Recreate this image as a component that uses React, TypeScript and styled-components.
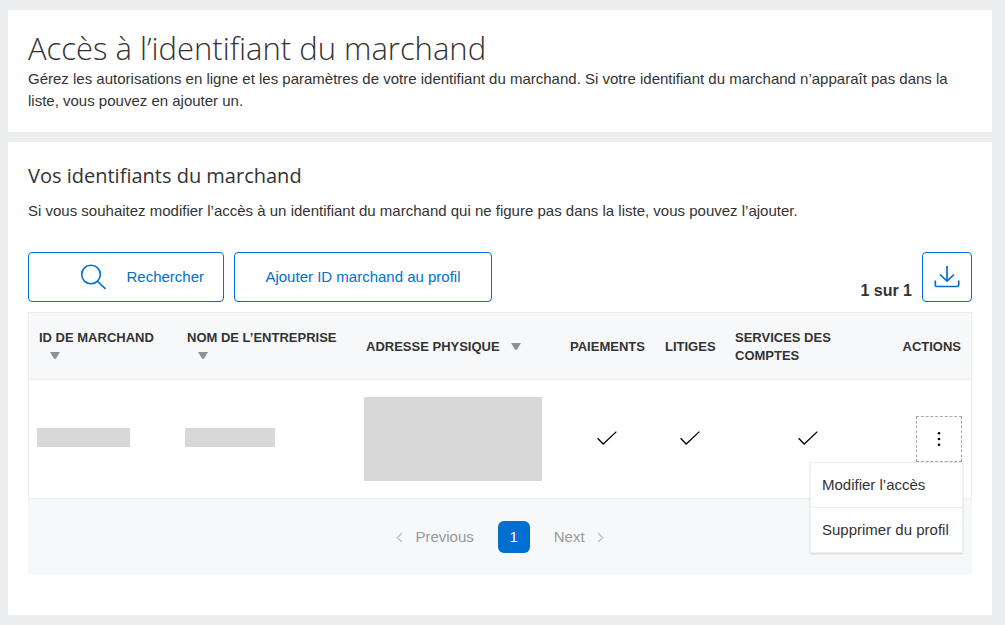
import React from "react";
import styled, { createGlobalStyle } from "styled-components";

const GlobalStyle = createGlobalStyle`
  *, *::before, *::after { box-sizing: border-box; }
  body {
    margin: 0;
    background: #fff;
    color: #333;
    font-family: "Liberation Sans", Arial, sans-serif;
    font-size: 15px;
    line-height: 22px;
  }
  h1, h2, p { margin: 0; }
  button { font: inherit; color: inherit; padding: 0; cursor: pointer; }
`;

const blue = "#006fcf";
const line = "#ecedee";

const Page = styled.div`
  display: flex;
  flex-direction: column;
  gap: 10px;
  padding: 10px 13px 10px 8px;
  background: #ecedee;
`;

const Card = styled.section<{ $top: number; $bottom: number }>`
  background: #fff;
  padding: ${(p) => p.$top}px 20px ${(p) => p.$bottom}px;
`;

const Title = styled.h1`
  font-family: "Open Sans", sans-serif;
  font-weight: 300;
  font-size: 31px;
  line-height: 36px;
  margin-bottom: 2px;
`;

const Subtitle = styled.h2`
  font-family: "Open Sans", sans-serif;
  font-weight: 400;
  font-size: 20px;
  line-height: 28px;
  margin-bottom: 10px;
`;

const Toolbar = styled.div`
  display: flex;
  align-items: flex-end;
  gap: 10px;
  margin: 30px 0 10px;
`;

const OutlineButton = styled.button<{ $width: number }>`
  display: flex;
  align-items: center;
  justify-content: center;
  width: ${(p) => p.$width}px;
  height: 50px;
  border: 1px solid ${blue};
  border-radius: 4px;
  background: #fff;
  color: ${blue};
`;

const SearchButton = styled(OutlineButton)`
  justify-content: flex-end;
  gap: 20px;
  padding-right: 19px;
`;

const Count = styled.span`
  margin-left: auto;
  font-size: 16px;
  font-weight: 700;
`;

const Table = styled.table`
  width: 100%;
  table-layout: fixed;
  border-collapse: separate;
  border-spacing: 0;
  border: 1px solid ${line};
`;

const HeadCell = styled.th<{ $align?: string }>`
  height: 67px;
  padding: 2px 10px 0;
  background: #f7f8f9;
  border-bottom: 1px solid ${line};
  font-size: 13px;
  line-height: 18px;
  text-align: ${(p) => p.$align || "left"};
`;

const SortButton = styled.button`
  display: inline-block;
  width: 10px;
  height: 7px;
  margin-left: 11px;
  border: 0;
  background: none;
  line-height: 0;
  vertical-align: 1px;
`;

const Cell = styled.td`
  height: 118px;
  padding: 0 9px 0 8px;
`;

const CheckIcon = styled.svg`
  display: block;
  margin: 0 auto 2px;
`;

const Redacted = styled.div<{ $w: number }>`
  width: ${(p) => p.$w}px;
  height: 19px;
  margin-bottom: 3px;
  background: #d8d8d8;
`;

const RedactedBlock = styled(Redacted)`
  height: 84px;
  margin-bottom: 0;
`;

const ActionBox = styled.div`
  position: relative;
  width: 46px;
  margin-left: auto;
`;

const MoreButton = styled.button`
  display: flex;
  align-items: center;
  justify-content: center;
  width: 46px;
  height: 46px;
  border: 1px dashed #a7a8aa;
  background: #fff;
`;

const Menu = styled.div`
  position: absolute;
  top: 100%;
  right: -1px;
  width: 153px;
  background: #fff;
  border: 1px solid ${line};
  box-shadow: 0 1px 2px rgba(0, 0, 0, 0.15);
`;

const MenuItem = styled.button`
  display: block;
  width: 100%;
  height: 44px;
  padding-left: 11px;
  border: 0;
  background: #fff;
  text-align: left;
  white-space: nowrap;
  & + & {
    height: 45px;
    border-top: 1px solid ${line};
  }
`;

const Pagination = styled.nav`
  display: flex;
  align-items: center;
  justify-content: center;
  gap: 24px;
  height: 76px;
  background: #f7f8f9;
  color: #97999b;
`;

const PageStep = styled.button`
  display: flex;
  align-items: center;
  gap: 12px;
  border: 0;
  background: none;
`;

const CurrentPage = styled.button`
  width: 32px;
  height: 32px;
  border: 0;
  border-radius: 6px;
  background: ${blue};
  color: #fff;
`;

const Check = () => (
  <CheckIcon width="20" height="14" viewBox="0 0 20 14" fill="none" stroke="#000" strokeWidth="1.3" role="img" aria-label="Oui">
    <path d="M.6 7.2 6.2 13 19.4.6" />
  </CheckIcon>
);

const Sort = ({ label }: { label: string }) => (
  <SortButton aria-label={label}>
    <svg width="10" height="7" viewBox="0 0 10 7">
      <path d="M0 0H10L6 6.5Q5 7.3 4 6.5Z" fill="#8e9092" />
    </svg>
  </SortButton>
);

const Chevron = ({ d }: { d: string }) => (
  <svg width="7" height="11" viewBox="0 0 7 11" fill="none" stroke="#c4c6c8" strokeWidth="1.6">
    <path d={d} />
  </svg>
);

const columns = [148, 179, 204, 95, 70, 166, 80];

export default function App() {
  return (
    <>
      <GlobalStyle />
      <Page>
        <Card $top={20} $bottom={20}>
          <Title>Accès à l’identifiant du marchand</Title>
          <p>
            Gérez les autorisations en ligne et les paramètres de votre identifiant du marchand. Si votre identifiant
            du marchand n’apparaît pas dans la liste, vous pouvez en ajouter un.
          </p>
        </Card>
        <Card $top={20} $bottom={40}>
          <Subtitle>Vos identifiants du marchand</Subtitle>
          <p>
            Si vous souhaitez modifier l’accès à un identifiant du marchand qui ne figure pas dans la liste, vous
            pouvez l’ajouter.
          </p>
          <Toolbar>
            <SearchButton $width={196}>
              <svg width="26" height="26" viewBox="0 0 26 26" fill="none" stroke={blue} strokeWidth="1.6">
                <circle cx="11" cy="10.5" r="9.3" />
                <path d="M17.5 17.2 25.5 25" />
              </svg>
              Rechercher
            </SearchButton>
            <OutlineButton $width={258}>Ajouter ID marchand au profil</OutlineButton>
            <Count>1 sur 1</Count>
            <OutlineButton $width={50} aria-label="Télécharger">
              <svg width="26" height="24" viewBox="0 0 26 24" fill="none" stroke={blue} strokeWidth="1.7">
                <path d="M13 1V16M6 9.5 13 16 20 9.5M1.3 15.5V20Q1.3 21.5 2.8 21.5H23.2Q24.7 21.5 24.7 20V15.5" />
              </svg>
            </OutlineButton>
          </Toolbar>
          <Table>
            <colgroup>
              {columns.map((w, i) => (
                <col key={i} width={w} />
              ))}
            </colgroup>
            <thead>
              <tr>
                <HeadCell>ID DE MARCHAND<Sort label="Trier par ID" /></HeadCell>
                <HeadCell>NOM DE L’ENTREPRISE<Sort label="Trier par nom" /></HeadCell>
                <HeadCell>ADRESSE PHYSIQUE<Sort label="Trier par adresse" /></HeadCell>
                <HeadCell>PAIEMENTS</HeadCell>
                <HeadCell>LITIGES</HeadCell>
                <HeadCell>SERVICES DES COMPTES</HeadCell>
                <HeadCell $align="right">ACTIONS</HeadCell>
              </tr>
            </thead>
            <tbody>
              <tr>
                <Cell><Redacted $w={93} /></Cell>
                <Cell><Redacted $w={90} /></Cell>
                <Cell><RedactedBlock $w={178} /></Cell>
                <Cell><Check /></Cell>
                <Cell><Check /></Cell>
                <Cell><Check /></Cell>
                <Cell>
                  <ActionBox>
                    <MoreButton aria-label="Actions" aria-expanded="true">
                      <svg width="4" height="14" viewBox="0 0 4 14">
                        <circle cx="2" cy="1.3" r="1.3" />
                        <circle cx="2" cy="7" r="1.3" />
                        <circle cx="2" cy="12.7" r="1.3" />
                      </svg>
                    </MoreButton>
                    <Menu role="menu">
                      <MenuItem role="menuitem">Modifier l’accès</MenuItem>
                      <MenuItem role="menuitem">Supprimer du profil</MenuItem>
                    </Menu>
                  </ActionBox>
                </Cell>
              </tr>
            </tbody>
          </Table>
          <Pagination aria-label="Pagination">
            <PageStep><Chevron d="M6 1 1.5 5.5 6 10" />Previous</PageStep>
            <CurrentPage aria-current="page">1</CurrentPage>
            <PageStep>Next<Chevron d="M1 1 5.5 5.5 1 10" /></PageStep>
          </Pagination>
        </Card>
      </Page>
    </>
  );
}
